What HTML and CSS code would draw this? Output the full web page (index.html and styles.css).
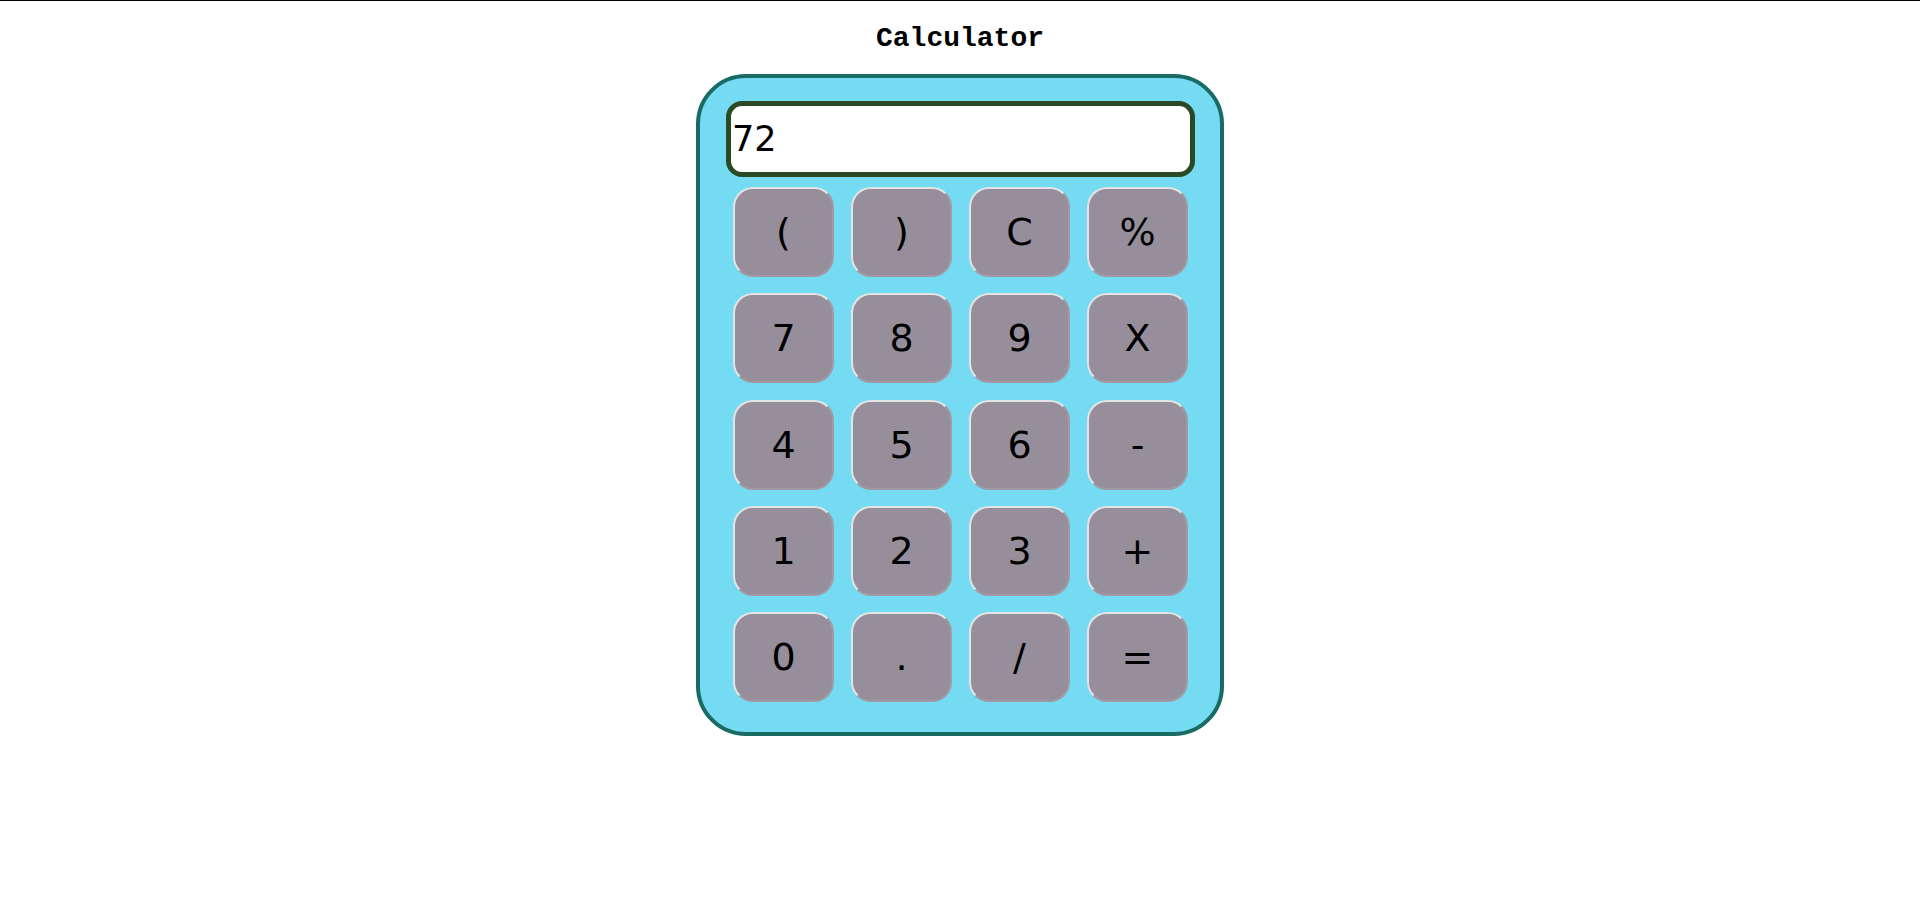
FILE: index.html
```html
<!DOCTYPE html>
<html>
<head>
<meta charset="utf-8">
<title>Calculator</title>
<link rel="stylesheet" href="styles.css">
</head>
<body>
<h1 class="title">Calculator</h1>
<div class="calc">
  <div class="display">72</div>
  <div class="keys">
    <button class="key">(</button>
    <button class="key">)</button>
    <button class="key">C</button>
    <button class="key">%</button>
    <button class="key">7</button>
    <button class="key">8</button>
    <button class="key">9</button>
    <button class="key">X</button>
    <button class="key">4</button>
    <button class="key">5</button>
    <button class="key">6</button>
    <button class="key">-</button>
    <button class="key">1</button>
    <button class="key">2</button>
    <button class="key">3</button>
    <button class="key">+</button>
    <button class="key">0</button>
    <button class="key">.</button>
    <button class="key">/</button>
    <button class="key">=</button>
  </div>
</div>
</body>
</html>
```
FILE: styles.css
```css
html, body {
  background: #ffffff;
}
body {
  margin: 0;
  border-top: 1px solid #000;
  font-family: "DejaVu Sans", Verdana, sans-serif;
}
.title {
  margin: 22px 0 19px;
  font: bold 28px/32px "Liberation Mono", "Courier New", monospace;
  text-align: center;
  color: #000;
}
.calc {
  box-sizing: border-box;
  width: 528px;
  height: 662px;
  margin: 0 auto;
  padding: 23px 25px 31px 26px;
  background: #74dbf3;
  border: 4px solid #186c63;
  border-radius: 50px;
}
.display {
  box-sizing: border-box;
  width: 469px;
  height: 76px;
  padding-left: 1px;
  display: flex;
  align-items: center;
  background: #fff;
  border: 5px solid #2a4a25;
  border-radius: 16px;
  font-size: 35px;
  color: #000;
}
.keys {
  display: grid;
  grid-template-columns: repeat(4, 101px);
  grid-auto-rows: 90px;
  column-gap: 17px;
  row-gap: 16.25px;
  margin: 10px 0 0 7px;
}
.key {
  box-sizing: border-box;
  padding: 0;
  background: #978e9c;
  border: 2px solid;
  border-color: #e4e4e4 #a19aa5 #a19aa5 #e4e4e4;
  border-radius: 20px;
  font-family: "DejaVu Sans", Verdana, sans-serif;
  font-size: 38px;
  color: #000;
}
```
